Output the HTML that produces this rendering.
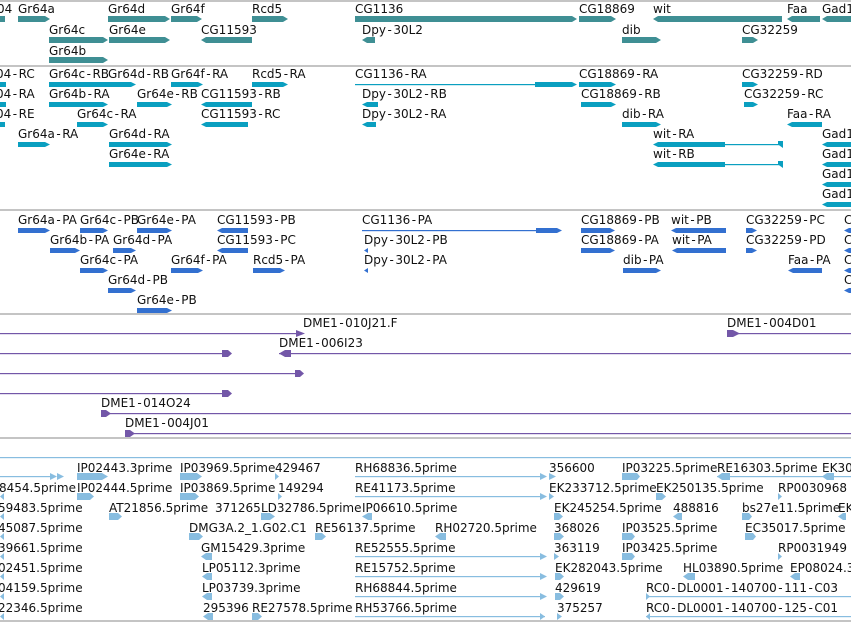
<!DOCTYPE html>
<html><head><meta charset="utf-8"><style>
body{margin:0;width:851px;height:622px;overflow:hidden;background:#fff;position:relative;font-family:"DejaVu Sans","Liberation Sans",sans-serif;}
.t{position:absolute;font-size:12px;line-height:14px;color:#111;white-space:nowrap;top:0}
.h{padding:0 1.5px}
svg{position:absolute;left:0;top:0}
</style></head><body>
<svg width="851" height="622">
<g stroke="#c4c4c4" stroke-width="2"><line x1="0" y1="1" x2="851" y2="1"/><line x1="0" y1="66" x2="851" y2="66"/><line x1="0" y1="210" x2="851" y2="210"/><line x1="0" y1="314" x2="851" y2="314"/><line x1="0" y1="438" x2="851" y2="438"/><line x1="0" y1="621" x2="851" y2="621"/></g>
<g fill="#3f8f94">
<rect x="0" y="16" width="5" height="6"/>
<path d="M18 16H45L50 19L45 22H18Z M108 16H165L170 19L165 22H108Z M171 16H197L202 19L197 22H171Z M252 16H283L288 19L283 22H252Z M355 16H572L577 19L572 22H355Z M579 16H611L616 19L611 22H579Z M653 19L658 16H782V22H658Z M787 19L792 16H820V22H792Z M822 19L827 16H851V22H827Z"/>
<path d="M49 37H103L108 40L103 43H49Z M109 37H165L170 40L165 43H109Z M201 40L206 37H252V43H206Z M362 40L367 37H375V43H367Z M622 37H656L661 40L656 43H622Z M742 37H753L758 40L753 43H742Z"/>
<path d="M49 57H103L108 60L103 63H49Z"/>
</g>
<g fill="#0a9fc0">
<rect x="0" y="82" width="6" height="5"/><rect x="0" y="102" width="6" height="5"/><rect x="0" y="122" width="5" height="5"/>
<path d="M49 82H131L136 84.5L131 87H49Z M171 82H198L203 84.5L198 87H171Z M252 82H283L288 84.5L283 87H252Z M535 82H572L577 84.5L572 87H535Z M579 82H611L616 84.5L611 87H579Z M742 82H753L758 84.5L753 87H742Z"/>
<rect x="355" y="84" width="180" height="1.2"/>
<path d="M49 102H103L108 104.5L103 107H49Z M137 102H167L172 104.5L167 107H137Z M201 104.5L206 102H252V107H206Z M362 104.5L367 102H378V107H367Z M581 102H611L616 104.5L611 107H581Z M744 102H753L758 104.5L753 107H744Z"/>
<path d="M77 122H103L108 124.5L103 127H77Z M201 124.5L206 122H248V127H206Z M362 124.5L367 122H376V127H367Z M622 122H656L661 124.5L656 127H622Z M787 124.5L792 122H822V127H792Z"/>
<path d="M18 142H45L50 144.5L45 147H18Z M109 142H167L172 144.5L167 147H109Z M653 144.5L658 142H725V147H658Z M822 144.5L827 142H851V147H827Z"/>
<rect x="725" y="144" width="58" height="1.2"/><path d="M778 141L783 141L783 148L778 144.5Z"/>
<path d="M109 162H167L172 164.5L167 167H109Z M653 164.5L658 162H725V167H658Z M822 164.5L827 162H851V167H827Z"/>
<rect x="725" y="164" width="58" height="1.2"/><path d="M778 161L783 161L783 168L778 164.5Z"/>
<path d="M822 184.5L827 182H851V187H827Z M822 204.5L827 202H851V207H827Z"/>
</g>
<g fill="#3370d0">
<path d="M18 228H45L50 230.5L45 233H18Z M80 228H103L108 230.5L103 233H80Z M137 228H167L172 230.5L167 233H137Z M217 230.5L222 228H248V233H222Z M536 228H557L562 230.5L557 233H536Z M581 228H610L615 230.5L610 233H581Z M671 230.5L676 228H726V233H676Z M746 228H752L757 230.5L752 233H746Z M844 230.5L849 228H851V233H849Z"/>
<rect x="362" y="230" width="174" height="1.2"/>
<path d="M50 248H75L80 250.5L75 253H50Z M113 248H131L136 250.5L131 253H113Z M217 250.5L222 248H248V253H222Z M364 250.5L368 248V253Z M581 248H610L615 250.5L610 253H581Z M672 250.5L677 248H726V253H677Z M746 248H752L757 250.5L752 253H746Z M844 250.5L849 248H851V253H849Z"/>
<path d="M80 268H103L108 270.5L103 273H80Z M171 268H198L203 270.5L198 273H171Z M253 268H280L285 270.5L280 273H253Z M364 270.5L368 268V273Z M623 268H656L661 270.5L656 273H623Z M788 270.5L793 268H822V273H793Z M844 270.5L849 268H851V273H849Z"/>
<path d="M108 288H131L136 290.5L131 293H108Z M844 290.5L849 288H851V293H849Z M137 308H167L172 310.5L167 313H137Z"/>
</g>
<g fill="#7357a8">
<rect x="0" y="333" width="300" height="1.2"/><path d="M296 330L305 333.5L296 337Z"/>
<rect x="727" y="333" width="124" height="1.2"/><path d="M727 330H733L740 333.5L733 337H727Z"/>
<rect x="0" y="353" width="225" height="1.2"/><path d="M222 350H228L232 353.5L228 357H222Z"/>
<rect x="279" y="353" width="572" height="1.2"/><path d="M279 353.5L285 350H291V357H285Z"/>
<rect x="0" y="373" width="298" height="1.2"/><path d="M295 370H300L304 373.5L300 377H295Z"/>
<rect x="0" y="393" width="225" height="1.2"/><path d="M222 390H228L232 393.5L228 397H222Z"/>
<rect x="101" y="413" width="750" height="1.2"/><path d="M101 410H106L111 413.5L106 417H101Z"/>
<rect x="125" y="433" width="726" height="1.2"/><path d="M125 430H130L135 433.5L130 437H125Z"/>
</g>
<g fill="#88bde0">
<rect x="0" y="457" width="851" height="1.2"/>
<rect x="0" y="476" width="55" height="1.2"/><path d="M50 473L57 476.5L50 480Z M57 473L64 476.5L57 480Z"/>
<path d="M77 473H102L108 476.5L102 480H77Z M180 473H197L202 476.5L197 480H180Z M275 473L279 476.5L275 480Z M549 473L556 476.5L549 480Z M622 473H637L640 476.5L637 480H622Z M717 476.5L722 473H730V480H722Z M822 476.5L827 473H834V480H827Z"/>
<rect x="355" y="476" width="190" height="1.2"/><path d="M540 473L547 476.5L540 480Z"/><rect x="717" y="476" width="140" height="1.2"/>
<path d="M0 496.5L4 493V500Z M77 493H90L94 496.5L90 500H77Z M180 493H195L199 496.5L195 500H180Z M278 493L282 496.5L278 500Z M549 493L554 496.5L549 500Z M656 493H662L666 496.5L662 500H656Z M778 493L782 496.5L778 500Z"/>
<rect x="355" y="496" width="190" height="1.2"/><path d="M540 493L547 496.5L540 500Z"/>
<path d="M0 516.5L4 513V520Z M109 513H118L122 516.5L118 520H109Z M261 513H270L275 516.5L270 520H261Z M362 516.5L368 513H372V520H368Z M554 513H559L563 516.5L559 520H554Z M673 516.5L678 513H682V520H678Z M742 513H749L752 516.5L749 520H742Z M838 516.5L843 513H846V520H843Z"/>
<path d="M0 536.5L4 533V540Z M189 533H199L203 536.5L199 540H189Z M315 533H322L326 536.5L322 540H315Z M435 536.5L440 533H446V540H440Z M554 533H560L564 536.5L560 540H554Z M622 533H632L635 536.5L632 540H622Z M745 533H753L756 536.5L753 540H745Z"/>
<path d="M0 556.5L4 553V560Z M201 556.5L206 553H212V560H206Z M554 553L559 556.5L554 560Z M622 553H632L635 556.5L632 560H622Z M778 553L782 556.5L778 560Z"/>
<rect x="355" y="556" width="190" height="1.2"/><path d="M540 553L547 556.5L540 560Z"/>
<path d="M0 576.5L4 573V580Z M202 576.5L207 573H212V580H207Z M555 573H560L564 576.5L560 580H555Z M683 576.5L688 573H695V580H688Z M790 576.5L795 573H800V580H795Z"/>
<rect x="355" y="576" width="190" height="1.2"/><path d="M540 573L547 576.5L540 580Z"/>
<path d="M0 596.5L4 593V600Z M202 596.5L207 593H212V600H207Z M555 593H560L564 596.5L560 600H555Z M646 593L650 596.5L646 600Z"/>
<rect x="355" y="596" width="190" height="1.2"/><path d="M540 593L547 596.5L540 600Z"/><rect x="646" y="596" width="205" height="1.2"/>
<path d="M0 616.5L4 613V620Z M203 616.5L208 613H213V620H208Z M252 613H258L262 616.5L258 620H252Z M557 613L562 616.5L557 620Z M646 616.5L650 613V620Z"/>
<rect x="355" y="616" width="190" height="1.2"/><path d="M540 613L545 616.5L540 620Z"/><rect x="646" y="616" width="205" height="1.2"/>
</g>
</svg>
<!-- track1 -->
<div class="t" style="left:-3px;top:2px">04</div><div class="t" style="left:18px;top:2px">Gr64a</div><div class="t" style="left:108px;top:2px">Gr64d</div><div class="t" style="left:171px;top:2px">Gr64f</div><div class="t" style="left:252px;top:2px">Rcd5</div><div class="t" style="left:355px;top:2px">CG1136</div><div class="t" style="left:579px;top:2px">CG18869</div><div class="t" style="left:653px;top:2px">wit</div><div class="t" style="left:787px;top:2px">Faa</div><div class="t" style="left:822px;top:2px">Gad1</div>
<div class="t" style="left:49px;top:23px">Gr64c</div><div class="t" style="left:109px;top:23px">Gr64e</div><div class="t" style="left:201px;top:23px">CG11593</div><div class="t" style="left:362px;top:23px">Dpy<span class="h">-</span>30L2</div><div class="t" style="left:622px;top:23px">dib</div><div class="t" style="left:742px;top:23px">CG32259</div>
<div class="t" style="left:49px;top:44px">Gr64b</div>
<!-- track2 -->
<div class="t" style="left:-4px;top:67px">04<span class="h">-</span>RC</div><div class="t" style="left:49px;top:67px">Gr64c<span class="h">-</span>RB</div><div class="t" style="left:108px;top:67px">Gr64d<span class="h">-</span>RB</div><div class="t" style="left:171px;top:67px">Gr64f<span class="h">-</span>RA</div><div class="t" style="left:252px;top:67px">Rcd5<span class="h">-</span>RA</div><div class="t" style="left:355px;top:67px">CG1136<span class="h">-</span>RA</div><div class="t" style="left:579px;top:67px">CG18869<span class="h">-</span>RA</div><div class="t" style="left:742px;top:67px">CG32259<span class="h">-</span>RD</div>
<div class="t" style="left:-4px;top:87px">04<span class="h">-</span>RA</div><div class="t" style="left:49px;top:87px">Gr64b<span class="h">-</span>RA</div><div class="t" style="left:137px;top:87px">Gr64e<span class="h">-</span>RB</div><div class="t" style="left:201px;top:87px">CG11593<span class="h">-</span>RB</div><div class="t" style="left:362px;top:87px">Dpy<span class="h">-</span>30L2<span class="h">-</span>RB</div><div class="t" style="left:581px;top:87px">CG18869<span class="h">-</span>RB</div><div class="t" style="left:744px;top:87px">CG32259<span class="h">-</span>RC</div>
<div class="t" style="left:-4px;top:107px">04<span class="h">-</span>RE</div><div class="t" style="left:77px;top:107px">Gr64c<span class="h">-</span>RA</div><div class="t" style="left:201px;top:107px">CG11593<span class="h">-</span>RC</div><div class="t" style="left:362px;top:107px">Dpy<span class="h">-</span>30L2<span class="h">-</span>RA</div><div class="t" style="left:622px;top:107px">dib<span class="h">-</span>RA</div><div class="t" style="left:787px;top:107px">Faa<span class="h">-</span>RA</div>
<div class="t" style="left:18px;top:127px">Gr64a<span class="h">-</span>RA</div><div class="t" style="left:109px;top:127px">Gr64d<span class="h">-</span>RA</div><div class="t" style="left:653px;top:127px">wit<span class="h">-</span>RA</div><div class="t" style="left:822px;top:127px">Gad1</div>
<div class="t" style="left:109px;top:147px">Gr64e<span class="h">-</span>RA</div><div class="t" style="left:653px;top:147px">wit<span class="h">-</span>RB</div><div class="t" style="left:822px;top:147px">Gad1</div>
<div class="t" style="left:822px;top:167px">Gad1</div><div class="t" style="left:822px;top:187px">Gad1</div>
<!-- track3 -->
<div class="t" style="left:18px;top:213px">Gr64a<span class="h">-</span>PA</div><div class="t" style="left:80px;top:213px">Gr64c<span class="h">-</span>PB</div><div class="t" style="left:137px;top:213px">Gr64e<span class="h">-</span>PA</div><div class="t" style="left:217px;top:213px">CG11593<span class="h">-</span>PB</div><div class="t" style="left:362px;top:213px">CG1136<span class="h">-</span>PA</div><div class="t" style="left:581px;top:213px">CG18869<span class="h">-</span>PB</div><div class="t" style="left:671px;top:213px">wit<span class="h">-</span>PB</div><div class="t" style="left:746px;top:213px">CG32259<span class="h">-</span>PC</div><div class="t" style="left:844px;top:213px">C</div>
<div class="t" style="left:50px;top:233px">Gr64b<span class="h">-</span>PA</div><div class="t" style="left:113px;top:233px">Gr64d<span class="h">-</span>PA</div><div class="t" style="left:217px;top:233px">CG11593<span class="h">-</span>PC</div><div class="t" style="left:364px;top:233px">Dpy<span class="h">-</span>30L2<span class="h">-</span>PB</div><div class="t" style="left:581px;top:233px">CG18869<span class="h">-</span>PA</div><div class="t" style="left:672px;top:233px">wit<span class="h">-</span>PA</div><div class="t" style="left:746px;top:233px">CG32259<span class="h">-</span>PD</div><div class="t" style="left:844px;top:233px">C</div>
<div class="t" style="left:80px;top:253px">Gr64c<span class="h">-</span>PA</div><div class="t" style="left:171px;top:253px">Gr64f<span class="h">-</span>PA</div><div class="t" style="left:253px;top:253px">Rcd5<span class="h">-</span>PA</div><div class="t" style="left:364px;top:253px">Dpy<span class="h">-</span>30L2<span class="h">-</span>PA</div><div class="t" style="left:623px;top:253px">dib<span class="h">-</span>PA</div><div class="t" style="left:788px;top:253px">Faa<span class="h">-</span>PA</div><div class="t" style="left:844px;top:253px">C</div>
<div class="t" style="left:108px;top:273px">Gr64d<span class="h">-</span>PB</div><div class="t" style="left:844px;top:273px">C</div>
<div class="t" style="left:137px;top:293px">Gr64e<span class="h">-</span>PB</div>
<!-- track4 -->
<div class="t" style="left:303px;top:316px">DME1<span class="h">-</span>010J21.F</div><div class="t" style="left:727px;top:316px">DME1<span class="h">-</span>004D01</div>
<div class="t" style="left:279px;top:336px">DME1<span class="h">-</span>006I23</div>
<div class="t" style="left:101px;top:396px">DME1<span class="h">-</span>014O24</div>
<div class="t" style="left:125px;top:416px">DME1<span class="h">-</span>004J01</div>
<!-- track5 -->
<div class="t" style="left:77px;top:461px">IP02443.3prime</div><div class="t" style="left:180px;top:461px">IP03969.5prime</div><div class="t" style="left:275px;top:461px">429467</div><div class="t" style="left:355px;top:461px">RH68836.5prime</div><div class="t" style="left:549px;top:461px">356600</div><div class="t" style="left:622px;top:461px">IP03225.5prime</div><div class="t" style="left:717px;top:461px">RE16303.5prime</div><div class="t" style="left:822px;top:461px">EK30</div>
<div class="t" style="left:-1px;top:481px">8454.5prime</div><div class="t" style="left:77px;top:481px">IP02444.5prime</div><div class="t" style="left:180px;top:481px">IP03869.5prime</div><div class="t" style="left:278px;top:481px">149294</div><div class="t" style="left:355px;top:481px">RE41173.5prime</div><div class="t" style="left:549px;top:481px">EK233712.5prime</div><div class="t" style="left:656px;top:481px">EK250135.5prime</div><div class="t" style="left:778px;top:481px">RP0030968</div>
<div class="t" style="left:-2px;top:501px">59483.5prime</div><div class="t" style="left:109px;top:501px">AT21856.5prime</div><div class="t" style="left:215px;top:501px">371265</div><div class="t" style="left:261px;top:501px">LD32786.5prime</div><div class="t" style="left:362px;top:501px">IP06610.5prime</div><div class="t" style="left:554px;top:501px">EK245254.5prime</div><div class="t" style="left:673px;top:501px">488816</div><div class="t" style="left:742px;top:501px">bs27e11.5prime</div><div class="t" style="left:838px;top:501px">EK</div>
<div class="t" style="left:-2px;top:521px">45087.5prime</div><div class="t" style="left:189px;top:521px">DMG3A.2_1.G02.C1</div><div class="t" style="left:315px;top:521px">RE56137.5prime</div><div class="t" style="left:435px;top:521px">RH02720.5prime</div><div class="t" style="left:554px;top:521px">368026</div><div class="t" style="left:622px;top:521px">IP03525.5prime</div><div class="t" style="left:745px;top:521px">EC35017.5prime</div>
<div class="t" style="left:-2px;top:541px">39661.5prime</div><div class="t" style="left:201px;top:541px">GM15429.3prime</div><div class="t" style="left:355px;top:541px">RE52555.5prime</div><div class="t" style="left:554px;top:541px">363119</div><div class="t" style="left:622px;top:541px">IP03425.5prime</div><div class="t" style="left:778px;top:541px">RP0031949</div>
<div class="t" style="left:-2px;top:561px">02451.5prime</div><div class="t" style="left:202px;top:561px">LP05112.3prime</div><div class="t" style="left:355px;top:561px">RE15752.5prime</div><div class="t" style="left:555px;top:561px">EK282043.5prime</div><div class="t" style="left:683px;top:561px">HL03890.5prime</div><div class="t" style="left:790px;top:561px">EP08024.3</div>
<div class="t" style="left:-2px;top:581px">04159.5prime</div><div class="t" style="left:202px;top:581px">LP03739.3prime</div><div class="t" style="left:355px;top:581px">RH68844.5prime</div><div class="t" style="left:555px;top:581px">429619</div><div class="t" style="left:646px;top:581px">RC0<span class="h">-</span>DL0001<span class="h">-</span>140700<span class="h">-</span>111<span class="h">-</span>C03</div>
<div class="t" style="left:-2px;top:601px">22346.5prime</div><div class="t" style="left:203px;top:601px">295396</div><div class="t" style="left:252px;top:601px">RE27578.5prime</div><div class="t" style="left:355px;top:601px">RH53766.5prime</div><div class="t" style="left:557px;top:601px">375257</div><div class="t" style="left:646px;top:601px">RC0<span class="h">-</span>DL0001<span class="h">-</span>140700<span class="h">-</span>125<span class="h">-</span>C01</div>
</body></html>
